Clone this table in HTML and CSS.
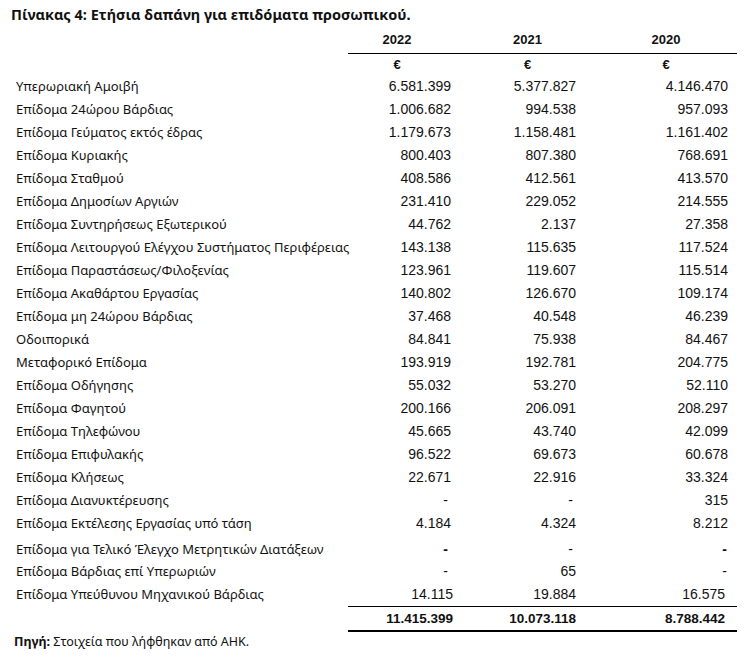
FILE: index.html
```html
<!DOCTYPE html>
<html lang="el">
<head>
<meta charset="utf-8">
<title>Πίνακας 4</title>
<link rel="stylesheet" href="styles.css">
</head>
<body>
<h1 class="title">Πίνακας 4: Ετήσια δαπάνη για επιδόματα προσωπικού.</h1>
<table class="tbl">
  <colgroup>
    <col class="c-label"><col class="c-a"><col class="c-b"><col class="c-c">
  </colgroup>
  <thead>
    <tr class="head">
      <th class="lbl"></th><th class="y a">2022</th><th class="y b">2021</th><th class="y c">2020</th>
    </tr>
  </thead>
  <tbody>
    <tr class="cur">
      <td class="lbl"></td><td class="y a">€</td><td class="y b">€</td><td class="y c">€</td>
    </tr>
    <tr><td class="lbl">Υπερωριακή Αμοιβή</td><td class="n a">6.581.399</td><td class="n b">5.377.827</td><td class="n c">4.146.470</td></tr>
    <tr><td class="lbl">Επίδομα 24ώρου Βάρδιας</td><td class="n a">1.006.682</td><td class="n b">994.538</td><td class="n c">957.093</td></tr>
    <tr><td class="lbl">Επίδομα Γεύματος εκτός έδρας</td><td class="n a">1.179.673</td><td class="n b">1.158.481</td><td class="n c">1.161.402</td></tr>
    <tr><td class="lbl">Επίδομα Κυριακής</td><td class="n a">800.403</td><td class="n b">807.380</td><td class="n c">768.691</td></tr>
    <tr><td class="lbl">Επίδομα Σταθμού</td><td class="n a">408.586</td><td class="n b">412.561</td><td class="n c">413.570</td></tr>
    <tr><td class="lbl">Επίδομα Δημοσίων Αργιών</td><td class="n a">231.410</td><td class="n b">229.052</td><td class="n c">214.555</td></tr>
    <tr><td class="lbl">Επίδομα Συντηρήσεως Εξωτερικού</td><td class="n a">44.762</td><td class="n b">2.137</td><td class="n c">27.358</td></tr>
    <tr><td class="lbl">Επίδομα Λειτουργού Ελέγχου Συστήματος Περιφέρειας</td><td class="n a">143.138</td><td class="n b">115.635</td><td class="n c">117.524</td></tr>
    <tr><td class="lbl">Επίδομα Παραστάσεως/Φιλοξενίας</td><td class="n a">123.961</td><td class="n b">119.607</td><td class="n c">115.514</td></tr>
    <tr><td class="lbl">Επίδομα Ακαθάρτου Εργασίας</td><td class="n a">140.802</td><td class="n b">126.670</td><td class="n c">109.174</td></tr>
    <tr><td class="lbl">Επίδομα μη 24ώρου Βάρδιας</td><td class="n a">37.468</td><td class="n b">40.548</td><td class="n c">46.239</td></tr>
    <tr><td class="lbl">Οδοιπορικά</td><td class="n a">84.841</td><td class="n b">75.938</td><td class="n c">84.467</td></tr>
    <tr><td class="lbl">Μεταφορικό Επίδομα</td><td class="n a">193.919</td><td class="n b">192.781</td><td class="n c">204.775</td></tr>
    <tr><td class="lbl">Επίδομα Οδήγησης</td><td class="n a">55.032</td><td class="n b">53.270</td><td class="n c">52.110</td></tr>
    <tr><td class="lbl">Επίδομα Φαγητού</td><td class="n a">200.166</td><td class="n b">206.091</td><td class="n c">208.297</td></tr>
    <tr><td class="lbl">Επίδομα Τηλεφώνου</td><td class="n a">45.665</td><td class="n b">43.740</td><td class="n c">42.099</td></tr>
    <tr><td class="lbl">Επίδομα Επιφυλακής</td><td class="n a">96.522</td><td class="n b">69.673</td><td class="n c">60.678</td></tr>
    <tr><td class="lbl">Επίδομα Κλήσεως</td><td class="n a">22.671</td><td class="n b">22.916</td><td class="n c">33.324</td></tr>
    <tr><td class="lbl">Επίδομα Διανυκτέρευσης</td><td class="n a dash">-</td><td class="n b dash">-</td><td class="n c">315</td></tr>
    <tr class="short"><td class="lbl">Επίδομα Εκτέλεσης Εργασίας υπό τάση</td><td class="n a">4.184</td><td class="n b">4.324</td><td class="n c">8.212</td></tr>
    <tr class="tall"><td class="lbl">Επίδομα για Τελικό Έλεγχο Μετρητικών Διατάξεων</td><td class="n a dash strong">-</td><td class="n b dash">-</td><td class="n c dash strong">-</td></tr>
    <tr><td class="lbl">Επίδομα Βάρδιας επί Υπερωριών</td><td class="n a dash">-</td><td class="n b">65</td><td class="n c dash">-</td></tr>
    <tr class="last"><td class="lbl">Επίδομα Υπεύθυνου Μηχανικού Βάρδιας</td><td class="n a">14.115</td><td class="n b">19.884</td><td class="n c">16.575</td></tr>
  </tbody>
  <tfoot>
    <tr class="total"><td class="lbl"></td><td class="n a">11.415.399</td><td class="n b">10.073.118</td><td class="n c">8.788.442</td></tr>
  </tfoot>
</table>
<p class="source"><strong>Πηγή:</strong> Στοιχεία που λήφθηκαν από ΑΗΚ.</p>
</body>
</html>
```
FILE: styles.css
```css
html, body {
  margin: 0;
  padding: 0;
  background: #ffffff;
  color: #111111;
}

body {
  font-family: "Noto Sans", "DejaVu Sans", sans-serif;
}

.title {
  margin: 0;
  padding: 5px 0 0 11px;
  height: 22px;
  font-size: 14.5px;
  line-height: 18px;
  font-weight: 700;
}

.tbl {
  border-collapse: collapse;
  table-layout: fixed;
  width: 737px;
}

.c-label { width: 348px; }
.c-a { width: 112px; }
.c-b { width: 135px; }
.c-c { width: 142px; }

.tbl th,
.tbl td {
  padding: 0;
  height: 23px;
  line-height: 23px;
  white-space: nowrap;
  vertical-align: middle;
}

.lbl {
  padding-left: 16px !important;
  font-family: "Noto Sans", "DejaVu Sans", sans-serif;
  font-size: 13px;
  text-align: left;
  color: #111111;
}

.y {
  font-family: "Liberation Sans", Arial, sans-serif;
  font-size: 13px;
  font-weight: 700;
  text-align: center;
}

.y.a { padding-right: 14px; }

.head th {
  height: 26px;
  line-height: 26px;
}

.head .y {
  border-bottom: 1px solid #000000;
}

.cur td {
  height: 21px;
  line-height: 21px;
}

.n {
  font-family: "Liberation Sans", Arial, sans-serif;
  font-size: 14px;
  text-align: right;
  color: #111111;
}

.n.a { padding-right: 9px; }
.n.b { padding-right: 19px; }
.n.c { padding-right: 9px; }

.dash.a { padding-right: 12px; }
.dash.b { padding-right: 22px; }
.dash.c { padding-right: 10px; }

.strong { font-weight: 700; }

.short td { height: 22px; line-height: 22px; }

.tall td {
  height: 22px;
  line-height: 20px;
  padding-top: 4px;
}

.last .n.a { padding-right: 7px; }
.last .n.c { padding-right: 12px; }

.total td {
  height: 23px;
  line-height: 23px;
}

.total .n {
  font-weight: 700;
  font-size: 13.5px;
  border-top: 1px solid #000000;
  border-bottom: 2px solid #000000;
}

.total .n.a { padding-right: 7px; }
.total .n.c { padding-right: 12px; }

.source {
  margin: 1px 0 0 14px;
  font-size: 12.5px;
  line-height: 18px;
  color: #111111;
}

.source strong {
  font-weight: 700;
}
```
